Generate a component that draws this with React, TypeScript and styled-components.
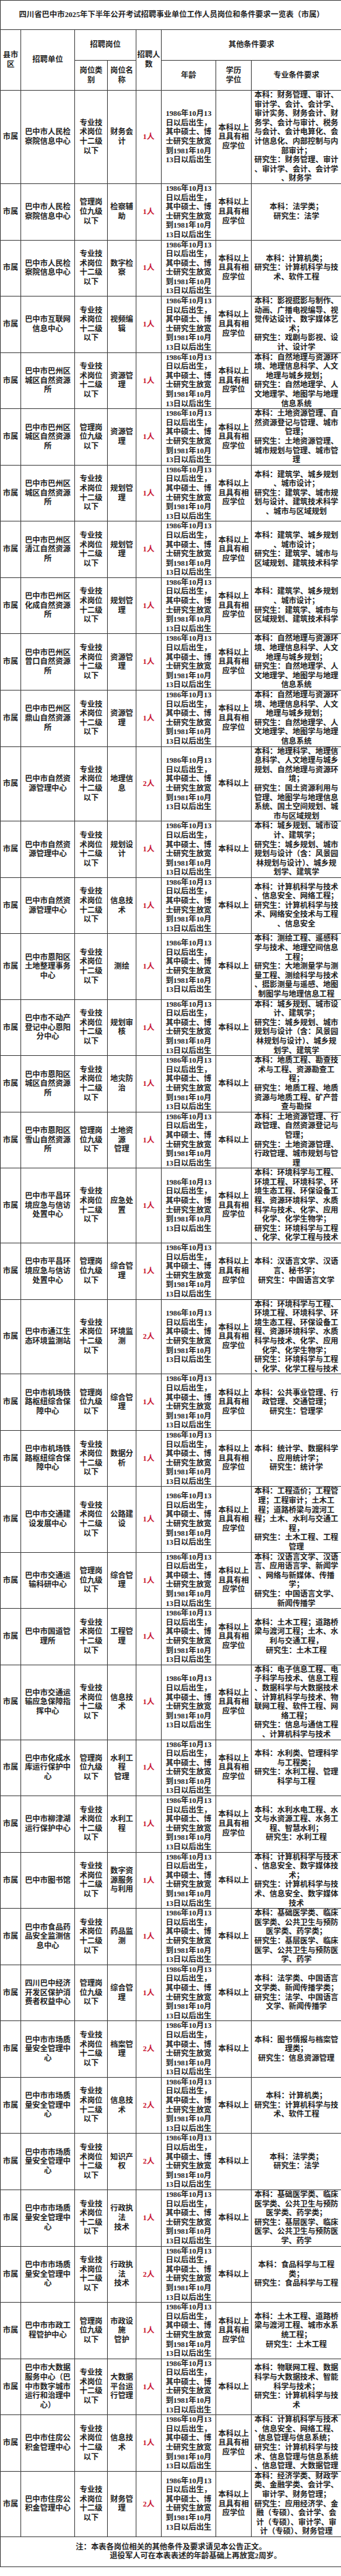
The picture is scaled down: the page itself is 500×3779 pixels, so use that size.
import styled, { createGlobalStyle } from 'styled-components';

const GlobalStyle = createGlobalStyle`
  body {
    margin: 0;
    background: #fff;
  }
`;

const Sheet = styled.table`
  width: 500px;
  table-layout: fixed;
  border-collapse: collapse;
  font-family: 'Liberation Serif', 'Noto Sans CJK SC', serif;
  font-size: 11.2px;
  font-weight: 700;
  line-height: 13.6px;
  color: #1e1e1e;
  background: #fff;
`;

const TitleCell = styled.td`
  height: 42px;
  border: 1px solid #444;
  text-align: center;
  vertical-align: middle;
  padding: 0 0 0 2px;
  white-space: nowrap;
`;

const HeadRow = styled.tr<{ $h: number }>`
  height: ${(p) => p.$h}px;
`;

const HeadCell = styled.th`
  border: 1px solid #444;
  font-weight: 700;
  text-align: center;
  vertical-align: middle;
  padding: 0;
  white-space: nowrap;
`;

const Cell = styled.td`
  border: 1px solid #444;
  text-align: center;
  vertical-align: middle;
  padding: 0;
  white-space: nowrap;
  overflow: hidden;
`;

const CountCell = styled(Cell)`
  color: #c8102e;
`;

const FootCell = styled.td`
  height: 43px;
  border: 1px solid #444;
  padding: 0;
  vertical-align: middle;
`;

const Note = styled.div<{ $indent: number }>`
  padding-left: ${(p) => p.$indent}px;
  white-space: nowrap;
`;

const A = '专业技/术岗位/十二级/以下';
const B = '管理岗/位九级/以下';
const X = '本科以上/且具有相/应学位';
const Y = '本科以上';
const AGE = '1986年10月13/日以后出生，/其中硕士、博/士研究生放宽/到1981年10月/13日以后出生';

const M_RES = '本科：自然地理与资源环/境、地理信息科学、人文/地理与城乡规划；/研究生：自然地理学、人/文地理学、地图学与地理/信息系统';
const M_PLAN = '本科：建筑学、城乡规划/、城市设计；/研究生：建筑学、城市与/区域规划、建筑技术科学';
const M_CITY = '本科：城乡规划、城市设/计、建筑学；/研究生：城乡规划、城市/规划与设计（含：风景园/林规划与设计）、城乡规/划学、建筑学';
const M_ENV = '本科：环境科学与工程、/环境工程、环境科学、环/境生态工程、环保设备工/程、资源环境科学、水质/科学与技术、化学、应用/化学、化学生物学；/研究生：环境科学与工程/、化学、化学工程与技术';
const M_MED = '本科：基础医学类、临床/医学类、公共卫生与预防/医学类、药学类；/研究生：基层医学、临床/医学、公共卫生与预防医/学、药学';
const M_CS = '本科：计算机类；/研究生：计算机科学与技/术、软件工程';

type Post = [string, string, string, string, string, string];

const MARKET = '巴中市市场质/量安全管理中/心';

const posts: Post[] = [
  ['巴中市人民检/察院信息中心', A, '财务会/计', '1人', X, '本科：财务管理、审计、/审计学、会计、会计学、/审计实务、财务会计、财/务学、会计与审计、税务/与会计、会计电算化、会/计信息化、内部控制与内/部审计；/研究生：财务管理、审计/、审计学、会计、会计学/、财务学'],
  ['巴中市人民检/察院信息中心', B, '检察辅/助', '1人', X, '本科：法学类；/研究生：法学'],
  ['巴中市人民检/察院信息中心', A, '数字检/察', '1人', X, M_CS],
  ['巴中市互联网/信息中心', A, '视频编/辑', '1人', X, '本科：影视摄影与制作、/动画、广播电视编导、视/觉传达设计、数字媒体艺/术；/研究生：戏剧与影视、设/计、设计学'],
  ['巴中市巴州区/城区自然资源/所', A, '资源管/理', '1人', X, M_RES],
  ['巴中市巴州区/城区自然资源/所', B, '资源管/理', '1人', X, '本科：土地资源管理、自/然资源登记与管理、城市/管理；/研究生：土地资源管理、/城市规划与管理、城市管/理'],
  ['巴中市巴州区/城区自然资源/所', A, '规划管/理', '1人', X, '本科：建筑学、城乡规划/、城市设计；/研究生：建筑学、城市规/划与设计、建筑技术科学/、城市与区域规划'],
  ['巴中市巴州区/清江自然资源/所', A, '规划管/理', '1人', X, M_PLAN],
  ['巴中市巴州区/化成自然资源/所', A, '规划管/理', '1人', X, M_PLAN],
  ['巴中市巴州区/曾口自然资源/所', A, '资源管/理', '1人', X, M_RES],
  ['巴中市巴州区/鼎山自然资源/所', A, '资源管/理', '1人', X, M_RES],
  ['巴中市自然资/源管理中心', A, '地理信/息', '2人', Y, '本科：地理科学、地理信/息科学、人文地理与城乡/规划、自然地理与资源环/境；/研究生：国土资源利用与/管理、地图学与地理信息/系统、国土空间规划、城/市与区域规划'],
  ['巴中市自然资/源管理中心', A, '规划设/计', '1人', Y, M_CITY],
  ['巴中市自然资/源管理中心', A, '信息技/术', '1人', Y, '本科：计算机科学与技术/、信息安全、网络工程；/研究生：计算机科学与技/术、网络安全技术与工程/、信息安全'],
  ['巴中市恩阳区/土地整理事务/中心', A, '测绘', '1人', Y, '本科：测绘工程、遥感科/学与技术、地理空间信息/工程；/研究生：大地测量学与测/量工程、测绘科学与技术/、摄影测量与遥感、地图/制图学与地理信息工程'],
  ['巴中市不动产/登记中心恩阳/分中心', A, '规划审/核', '1人', Y, M_CITY],
  ['巴中市恩阳区/城区自然资源/所', A, '地灾防/治', '1人', Y, '本科：地质工程、勘查技/术与工程、资源勘查工/程；/研究生：地质工程、地质/资源与地质工程、矿产普/查与勘探'],
  ['巴中市恩阳区/雪山自然资源/所', B, '土地资/源/管理', '1人', Y, '本科：土地资源管理、行/政管理、自然资源登记与/管理；/研究生：土地资源管理、/行政管理、城市规划与管/理'],
  ['巴中市平昌环/境应急与信访/处置中心', A, '应急处/置', '1人', X, M_ENV],
  ['巴中市平昌环/境应急与信访/处置中心', B, '综合管/理', '1人', X, '本科：汉语言文学、汉语/言、秘书学；/研究生：中国语言文学'],
  ['巴中市通江生/态环境监测站', A, '环境监/测', '2人', X, M_ENV],
  ['巴中市机场铁/路枢纽综合保/障中心', B, '综合管/理', '1人', X, '本科：公共事业管理、行/政管理、交通管理；/研究生：管理学'],
  ['巴中市机场铁/路枢纽综合保/障中心', A, '数据分/析', '1人', X, '本科：统计学、数据科学/、应用统计学；/研究生：统计学'],
  ['巴中市交通建/设发展中心', A, '公路建/设', '1人', X, '本科：工程造价；工程管/理；工程审计；土木工/程；道路桥梁与渡河工/程；土木、水利与交通工/程，/研究生：土木工程、工程/管理'],
  ['巴中市交通运/输科研中心', B, '综合管/理', '1人', X, '本科：汉语言文学、汉语/言、应用语言学、新闻学/、网络与新媒体、传播/学；/研究生：中国语言文学、/新闻传播学'],
  ['巴中市国道管/理所', A, '工程管/理', '1人', X, '本科：土木工程；道路桥/梁与渡河工程；土木、水/利与交通工程，/研究生：土木工程'],
  ['巴中市交通运/输应急保障指/挥中心', A, '信息技/术', '1人', X, '本科：电子信息工程、电/子科学与技术、信息工程/、数据科学与大数据技术/、计算机科学与技术、物/联网工程、软件工程、网/络工程；/研究生：信息与通信工程/、计算机科学与技术'],
  ['巴中市化成水/库运行保护中/心', B, '水利工/程/管理', '1人', X, '本科：水利类、管理科学/与工程类；/研究生：水利工程、管理/科学与工程'],
  ['巴中市柳津湖/运行保护中心', A, '水利工/程', '1人', X, '本科：水利水电工程、水/文与水资源工程、水务工/程、智慧水利；/研究生：水利工程'],
  ['巴中市图书馆', A, '数字资/源服务/与利用', '1人', Y, '本科：计算机科学与技术/、信息安全、数字媒体技/术；/研究生：计算机科学与技/术、信息安全、数字媒体/技术'],
  ['巴中市食品药/品安全监测信/息中心', A, '药品监/测', '1人', Y, M_MED],
  ['四川巴中经济/开发区保护消/费者权益中心', B, '综合管/理', '1人', Y, '本科：法学类、中国语言/文学类、新闻传播学类；/研究生：法学、中国语言/文学、新闻传播学'],
  [MARKET, A, '档案管/理', '2人', Y, '本科：图书情报与档案管/理类；/研究生：信息资源管理'],
  [MARKET, A, '信息技/术', '2人', Y, M_CS],
  [MARKET, A, '知识产/权', '2人', Y, '本科：法学类；/研究生：法学'],
  [MARKET, A, '行政执/法/技术', '1人', Y, M_MED],
  [MARKET, A, '行政执/法/技术', '2人', Y, '本科：食品科学与工程/类；/研究生：食品科学与工程'],
  ['巴中市市政工/程管护中心', B, '市政设/施/管护', '1人', X, '本科：土木工程、道路桥/梁与渡河工程、城市水系/统工程；/研究生：土木工程'],
  ['巴中市大数据/服务中心（巴/中市数字城市/运行和治理中/心）', A, '大数据/平台运/行管理', '1人', Y, '本科：物联网工程、数据/科学与大数据技术、智能/科学与技术；/研究生：计算机科学与技/术'],
  ['巴中市住房公/积金管理中心', A, '信息技/术', '1人', X, '本科：计算机科学与技术/、信息安全、网络工程、/信息管理与信息系统；/研究生：计算机科学与技/术、信息管理与信息系统/、信息管理、大数据管理'],
  ['巴中市住房公/积金管理中心', A, '财务管/理', '2人', X, '本科：经济学类、财政学/类、金融学类、会计学、/审计学、财务管理；/研究生：应用经济学、金/融（专硕）、会计学、会/计（专硕）、审计学、审/计（专硕）、财务管理'],
];

function Lines({ text }: { text: string }) {
  const parts = text.split('/');
  return (
    <>
      {parts.map((p, i) => (
        <span key={i}>
          {p}
          {i < parts.length - 1 && <br />}
        </span>
      ))}
    </>
  );
}

export default function App() {
  return (
    <>
      <GlobalStyle />
      <Sheet>
        <colgroup>
          <col style={{ width: 30 }} />
          <col style={{ width: 79 }} />
          <col style={{ width: 48 }} />
          <col style={{ width: 42 }} />
          <col style={{ width: 37 }} />
          <col style={{ width: 80 }} />
          <col style={{ width: 52 }} />
          <col style={{ width: 132 }} />
        </colgroup>
        <thead>
          <tr>
            <TitleCell colSpan={8}>
              四川省巴中市2025年下半年公开考试招聘事业单位工作人员岗位和条件要求一览表（市属）
            </TitleCell>
          </tr>
          <HeadRow $h={45}>
            <HeadCell rowSpan={2}>
              <Lines text="县市/区" />
            </HeadCell>
            <HeadCell rowSpan={2}>招聘单位</HeadCell>
            <HeadCell colSpan={2}>招聘岗位</HeadCell>
            <HeadCell rowSpan={2}>
              <Lines text="招聘人/数" />
            </HeadCell>
            <HeadCell colSpan={3}>其他条件要求</HeadCell>
          </HeadRow>
          <HeadRow $h={44}>
            <HeadCell>
              <Lines text="岗位类/别" />
            </HeadCell>
            <HeadCell>
              <Lines text="岗位名/称" />
            </HeadCell>
            <HeadCell>年龄</HeadCell>
            <HeadCell>
              <Lines text="学历/学位" />
            </HeadCell>
            <HeadCell>专业条件要求</HeadCell>
          </HeadRow>
        </thead>
        <tbody>
          {posts.map(([unit, kind, name, count, edu, major], i) => (
            <tr key={i}>
              <Cell>市属</Cell>
              <Cell>
                <Lines text={unit} />
              </Cell>
              <Cell>
                <Lines text={kind} />
              </Cell>
              <Cell>
                <Lines text={name} />
              </Cell>
              <CountCell>{count}</CountCell>
              <Cell>
                <Lines text={AGE} />
              </Cell>
              <Cell>
                <Lines text={edu} />
              </Cell>
              <Cell>
                <Lines text={major} />
              </Cell>
            </tr>
          ))}
          <tr>
            <FootCell colSpan={8}>
              <Note $indent={110}>注：本表各岗位相关的其他条件及要求请见本公告正文。</Note>
              <Note $indent={160}>退役军人可在本表表述的年龄基础上再放宽2周岁。</Note>
            </FootCell>
          </tr>
        </tbody>
      </Sheet>
    </>
  );
}
